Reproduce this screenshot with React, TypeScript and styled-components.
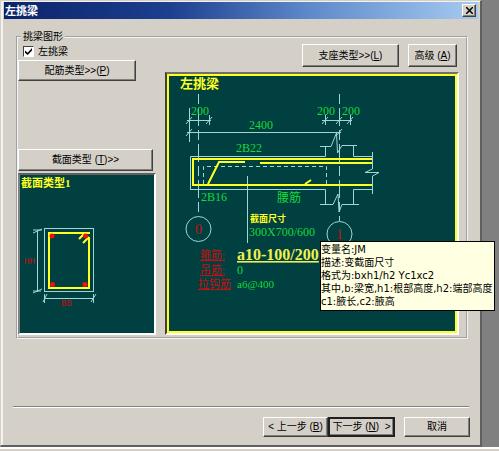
import React from "react";
import styled, { createGlobalStyle } from "styled-components";

const FACE = "#d4d0c8";
const SHADOW = "#808080";
const DARK = "#404040";
const CANVAS = "#004040";
const CYAN = "#9fd6d6";
const YELLOW = "#ffff20";
const GREEN = "#18d838";
const RED = "#c01010";
const SANS = '"Liberation Sans", "Noto Sans CJK SC", sans-serif';
const SERIF = '"Liberation Serif", "Noto Sans CJK SC", serif';

const GlobalStyle = createGlobalStyle`
  * { box-sizing: border-box; }
  body { margin: 0; background: ${SHADOW}; font: 10px/12px ${SANS}; color: #000; }
`;

const Desktop = styled.div`
  display: flex;
  flex-direction: column;
  min-height: 100vh;
`;

const Workspace = styled.div`
  display: flex;
  flex: 1;
  padding-right: 17px;
`;

const Strip = styled.div`
  height: 4px;
  background: ${FACE};
  border-top: 2px solid #fff;
`;

const Dialog = styled.section`
  flex: 1;
  display: flex;
  flex-direction: column;
  background: ${FACE};
  border: 1px solid ${FACE};
  border-right: 2px solid #606060;
  border-bottom: 2px solid #606060;
  box-shadow: inset 2px 1px 0 #f4f2ee;
  padding: 1px 2px 8px 3px;
`;

const TitleBar = styled.header`
  display: flex;
  align-items: center;
  justify-content: space-between;
  height: 17px;
  padding: 0 2px 0 1px;
  background: linear-gradient(90deg, #0a246a, #1d3f8f 35%, #5f8bcb 65%, #a6caf0);
  color: #fff;
`;

const Title = styled.h1`
  margin: 0;
  font: bold 11px/16px ${SANS};
`;

const Button = styled.button<{ $width?: number; $height?: number; $default?: boolean }>`
  width: ${(p) => (p.$width ? `${p.$width}px` : "auto")};
  height: ${(p) => p.$height ?? 20}px;
  padding: 0;
  border: ${(p) => (p.$default ? "2px solid" : "1px solid")};
  border-color: ${(p) => (p.$default ? "#202020" : `#fff ${DARK} ${DARK} #fff`)};
  box-shadow: inset -1px -1px 0 ${SHADOW};
  background: ${FACE};
  color: #000;
  font: 10px/12px ${SANS};
  white-space: pre;
`;

const CloseButton = styled(Button)`
  display: grid;
  place-items: center;
`;

const Group = styled.fieldset`
  display: block;
  min-width: 0;
  margin: 12px 10px 0 12px;
  padding: 0 7px 2px 0;
  border: 2px groove #f4f4f4;
`;

const Legend = styled.legend`
  margin-left: 3px;
  padding: 0 2px;
  line-height: 12px;
`;

const Columns = styled.div`
  display: flex;
  gap: 9px;
`;

const LeftColumn = styled.div`
  display: flex;
  flex-direction: column;
  align-items: flex-start;
  width: 138px;
  padding-top: 2px;
`;

const RightColumn = styled.div`
  flex: 1;
  min-width: 0;
`;

const CheckLabel = styled.label`
  display: flex;
  align-items: center;
  gap: 4px;
  height: 13px;
  margin: 0 0 2px 5px;
`;

const CheckBox = styled.input`
  appearance: none;
  display: grid;
  place-items: center;
  width: 11px;
  height: 11px;
  margin: 0;
  border: 1px solid;
  border-color: ${DARK} #fff #fff ${DARK};
  background: #fff;
  &:checked::before {
    content: "";
    width: 7px;
    height: 7px;
    background: #000;
    clip-path: polygon(0 35%, 38% 68%, 100% 0, 100% 35%, 38% 100%, 0 68%);
  }
`;

const SectionArea = styled.div`
  display: flex;
  flex-direction: column;
  align-items: flex-start;
  gap: 2px;
  width: 100%;
  margin-top: auto;
`;

const ButtonRow = styled.div`
  display: flex;
  justify-content: flex-end;
  gap: 9px;
  padding: 1px 2px 5px 0;
`;

const SectionPanel = styled.div`
  width: 100%;
  border: 2px solid;
  border-color: #606060 #fff #fff ${SHADOW};
  background: ${CANVAS};
`;

const BeamPanel = styled.div`
  position: relative;
  border: 2px solid;
  border-color: #707070 #fff #fff ${DARK};
  background: ${CANVAS};
`;

const YellowFrame = styled.div`
  border: 2px solid ${YELLOW};
`;

const Drawing = styled.svg`
  display: block;
  width: 100%;
  height: auto;
`;

const Note = styled.text<{ $size?: number; $color?: string; $bold?: boolean; $underline?: boolean }>`
  font-family: ${SERIF};
  font-size: ${(p) => p.$size ?? 12}px;
  font-weight: ${(p) => (p.$bold ? "bold" : "normal")};
  fill: ${(p) => p.$color ?? GREEN};
  text-decoration: ${(p) => (p.$underline ? "underline" : "none")};
`;

const SizeMark = styled(Note)`
  font-family: "Liberation Mono", monospace;
`;

const Tooltip = styled.div`
  position: absolute;
  top: 167px;
  left: 153px;
  padding: 1px 2px 2px 0;
  border: 1px solid #000;
  background: #ffffe1;
  font-family: "DejaVu Sans", "Noto Sans CJK SC", sans-serif;
  line-height: 13px;
  white-space: nowrap;
`;

const Divider = styled.hr`
  width: calc(100% - 18px);
  margin: auto 9px 9px;
  border: 0;
  border-top: 1px solid ${SHADOW};
  border-bottom: 1px solid #fff;
`;

const Footer = styled.footer`
  display: flex;
  justify-content: flex-end;
  padding-right: 8px;
`;

const StepButtons = styled.div`
  display: flex;
  margin-right: 9px;
`;

function SectionDrawing() {
  return (
    <Drawing viewBox="20 175 134 158" role="img" aria-label="截面类型1">
      <Note x="21" y="187" $size={11} $bold $color={YELLOW}>截面类型1</Note>
      <g fill="none" stroke={CYAN}>
        <rect x="44.5" y="228.5" width="49" height="63" />
        <path d="M37.5 230V292M33 233l9-4M33 230h9M33 293l9-4M33 291h8M44 298.5H94M43 302l4-8M44.5 294v9M91 302l5-8M93.5 294v9" />
      </g>
      <g fill="none" stroke={YELLOW} strokeWidth="2">
        <path d="M48 233H90M49 233V288M48 288H90M89 237V288M79 239l5-5M83 243l6-6" />
      </g>
      <g fill="#f01010">
        <circle cx="52" cy="236" r="2.5" />
        <circle cx="85.5" cy="236" r="2.5" />
        <circle cx="52.5" cy="284.5" r="2.5" />
        <circle cx="85" cy="284.5" r="2.5" />
      </g>
      <SizeMark x="24" y="264" $size={9} $color={RED}>HH</SizeMark>
      <SizeMark x="61" y="306" $size={9} $color={RED}>BB</SizeMark>
    </Drawing>
  );
}

function BeamDrawing() {
  return (
    <Drawing viewBox="169 76 286 255" role="img" aria-label="左挑梁">
      <Note x="180" y="88" $size={13} $bold $color={YELLOW}>左挑梁</Note>
      <g fill="none" stroke={CYAN}>
        <path strokeDasharray="10 4 18 4" d="M198.5 94V216M339.5 94V221" />
        <path d="M189.5 108V142M187 120.5H211M186 124l6-7M206 124l6-7M209.5 115v10M187 132.5H341M186 136l6-7M336 136l6-7" />
        <path d="M322 120.5H352M322 124l6-7M325.5 115v10M336 124l6-7M347 124l6-7M350.5 115v10" />
        <path d="M190.5 189V156.5H325.5V146M320 146.5H331L336.5 133L337.5 153L342 145.5H357M353.5 146V156.5H372M372.5 152V169L365 172.5H379L372.5 176V194M190 189.5H325.5V204M320 204.5H333L338 194L339 212L342 204.5H359M353.5 204V189.5H372" />
        <path strokeDasharray="4 3" d="M203.5 184V166.5H326.5V184" />
        <path d="M247.5 176V243" />
        <circle cx="198.5" cy="229" r="12.5" />
        <circle cx="339.5" cy="234" r="12.5" />
      </g>
      <g fill="none" stroke={YELLOW} strokeWidth="2">
        <path d="M372 159H193V185H372M208 184L219 162H245M260 163H372M305 184l6-4" />
      </g>
      <Note x="191" y="115">200</Note>
      <Note x="317" y="115">200</Note>
      <Note x="342" y="115">200</Note>
      <Note x="249" y="129">2400</Note>
      <Note x="236" y="152">2B22</Note>
      <Note x="201" y="201">2B16</Note>
      <Note x="277" y="202">腰筋</Note>
      <Note x="250" y="222" $size={9} $bold $color={YELLOW}>截面尺寸</Note>
      <Note x="249" y="236">300X700/600</Note>
      <Note x="195" y="234" $size={14} $color={RED}>0</Note>
      <Note x="336" y="239" $size={14} $color={RED}>1</Note>
      <Note x="200" y="259" $size={11} $color={RED} $underline>箍筋:</Note>
      <Note x="200" y="274" $size={11} $color={RED} $underline>吊筋:</Note>
      <Note x="198" y="288" $size={11} $color={RED} $underline>拉钩筋</Note>
      <Note x="237" y="260" $size={16} $bold $color="#f0f050" $underline>a10-100/200</Note>
      <Note x="237" y="274">0</Note>
      <Note x="237" y="288" $size={11}>a6@400</Note>
    </Drawing>
  );
}

export default function App() {
  return (
    <Desktop>
      <GlobalStyle />
      <Workspace>
        <Dialog role="dialog" aria-label="左挑梁">
          <TitleBar>
            <Title>左挑梁</Title>
            <CloseButton type="button" aria-label="关闭" $width={14} $height={13}>
              <svg width="7" height="7" viewBox="0 0 7 7">
                <path d="M0 0l7 7M7 0L0 7" stroke="#000" strokeWidth="1.5" />
              </svg>
            </CloseButton>
          </TitleBar>
          <Group>
            <Legend>挑梁图形</Legend>
            <Columns>
              <LeftColumn>
                <CheckLabel>
                  <CheckBox type="checkbox" defaultChecked />
                  左挑梁
                </CheckLabel>
                <Button type="button" $width={118} $height={21}>配筋类型&gt;&gt;(<u>P</u>)</Button>
                <SectionArea>
                  <Button type="button" $width={135} $height={22}>截面类型 (<u>T</u>)&gt;&gt;</Button>
                  <SectionPanel><SectionDrawing /></SectionPanel>
                </SectionArea>
              </LeftColumn>
              <RightColumn>
                <ButtonRow>
                  <Button type="button" $width={97} $height={23}>支座类型&gt;&gt;(<u>L</u>)</Button>
                  <Button type="button" $width={49} $height={23}>高级 (<u>A</u>)</Button>
                </ButtonRow>
                <BeamPanel>
                  <YellowFrame><BeamDrawing /></YellowFrame>
                  <Tooltip role="tooltip">
                    <div>变量名:JM</div>
                    <div>描述:变截面尺寸</div>
                    <div>格式为:bxh1/h2 Yc1xc2</div>
                    <div>其中,b:梁宽,h1:根部高度,h2:端部高度</div>
                    <div>c1:腋长,c2:腋高</div>
                  </Tooltip>
                </BeamPanel>
              </RightColumn>
            </Columns>
          </Group>
          <Divider />
          <Footer>
            <StepButtons>
              <Button type="button" $width={65}>&lt; 上一步 (<u>B</u>)</Button>
              <Button type="button" $width={67} $default>下一步 (<u>N</u>)  &gt;</Button>
            </StepButtons>
            <Button type="button" $width={66}>取消</Button>
          </Footer>
        </Dialog>
      </Workspace>
      <Strip />
    </Desktop>
  );
}
